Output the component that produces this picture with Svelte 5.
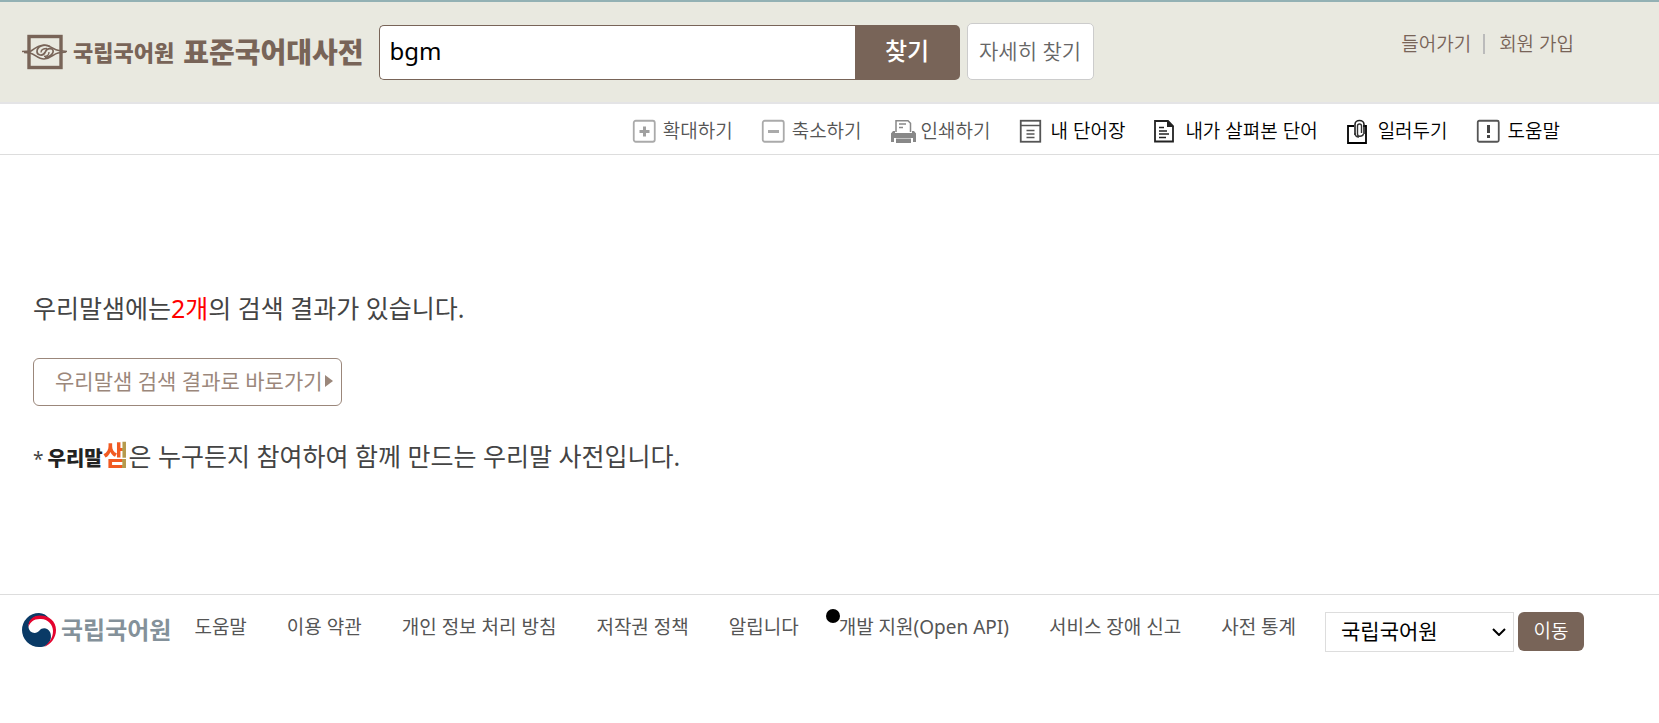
<script>
  const tools = [
    { id: 'zoomIn', label: '확대하기', tone: 'soft' },
    { id: 'zoomOut', label: '축소하기', tone: 'soft' },
    { id: 'print', label: '인쇄하기', tone: 'soft' },
    { id: 'words', label: '내 단어장', tone: 'strong' },
    { id: 'history', label: '내가 살펴본 단어', tone: 'strong' },
    { id: 'guide', label: '일러두기', tone: 'strong' },
    { id: 'help', label: '도움말', tone: 'strong' }
  ];
  const links = [
    { label: '도움말' },
    { label: '이용 약관' },
    { label: '개인 정보 처리 방침' },
    { label: '저작권 정책' },
    { label: '알립니다' },
    { label: '개발 지원(Open API)', dot: true },
    { label: '서비스 장애 신고' },
    { label: '사전 통계' }
  ];
  let query = $state('bgm');
</script>

<header>
  <a class="brand" href="#home">
    <svg width="46" height="36" viewBox="0 0 46 36" fill="none" stroke="#786458" aria-hidden="true">
      <rect x="7" y="2.5" width="32" height="31" stroke-width="3.4" />
      <path d="M0 17.5l9-.5c4-3 8-6 13-6 7 0 9 5 15 5.500l8 1" stroke-width="1.600" />
      <path d="M2 18.500l6 .5c5 1 8 6 14 6 7 0 9-5 14-6l8-1" stroke-width="1.600" />
      <path d="M28 12.500c-6-3-13 0-13 5 0 4 6 5 8 1 1.500-3.500 4-4.500 7-3.500 3 2 0 8-7 8.500" stroke-width="1.700" />
      <path d="M25 14.500c-4 0-6 2-6 4M27 18c0 3-2 4.500-5 4.500" stroke-width="1.300" />
    </svg>
    <span class="org">국립국어원</span>
    <span class="name">표준국어대사전</span>
  </a>
  <form class="search" onsubmit={(e) => e.preventDefault()}>
    <input type="text" aria-label="찾기" bind:value={query} />
    <button class="find" type="submit">찾기</button>
    <button class="advanced" type="button">자세히 찾기</button>
  </form>
  <nav class="account">
    <a href="#login">들어가기</a>
    <a href="#join">회원 가입</a>
  </nav>
</header>

<div class="toolbar">
  {#each tools as tool}
    <button type="button" class={tool.tone}>
      <svg width="22" height="26" viewBox="0 0 22 26" aria-hidden="true">
        {#if tool.id === 'zoomIn'}
          <rect x="0.75" y="2.750" width="21" height="21" rx="2" fill="none" stroke="#aaa" stroke-width="1.800" />
          <path d="M6.500 13.500h10M11.500 8.500v10" stroke="#a0a0a0" stroke-width="3" />
        {:else if tool.id === 'zoomOut'}
          <rect x="0.75" y="2.750" width="21" height="21" rx="2" fill="none" stroke="#aaa" stroke-width="1.800" />
          <path d="M6 13.500h11" stroke="#aaa" stroke-width="3" />
        {:else if tool.id === 'print'}
          <path d="M5 14V2.750h12l2.500 2.500V14" fill="#fff" stroke="#888" stroke-width="1.500" />
          <path d="M8 6h7M8 9.500h4" stroke="#888" stroke-width="1.300" />
          <path d="M2 13h2v2h17v-2h2l2 2.500V24h-3v-4H3v4H0v-8.500z" fill="#888" />
          <path d="M5 20.500h15V25H5z" fill="#888" />
          <path d="M0 16l1-1h23l1 1v4H0z" fill="#888" />
        {:else if tool.id === 'words'}
          <rect x="0.75" y="2.750" width="19.500" height="21" fill="none" stroke="#555" stroke-width="1.800" />
          <path d="M1 7.500h19" stroke="#555" stroke-width="1.500" />
          <path d="M6.500 12.500h8M6.500 16h8M6.500 19.500h8" stroke="#555" stroke-width="1.500" />
        {:else if tool.id === 'history'}
          <path d="M1 3h13l5 5v15.500H1z" fill="none" stroke="#222" stroke-width="1.800" />
          <path d="M13 2l7 7h-7z" fill="#222" />
          <path d="M5 9.500h5M5 13h8M5 16h10M5 19.500h7" stroke="#222" stroke-width="1.500" />
        {:else if tool.id === 'guide'}
          <path d="M7 8H1v17h18V8h-3" fill="none" stroke="#000" stroke-width="1.800" />
          <path d="M8 17V6.500a4.500 4 0 0 1 9 0V16" fill="none" stroke="#222" stroke-width="1.600" />
          <path d="M14.500 15V8a2 2 0 0 0-4 0v8c0 3 5 3 6 0M8 15c0 3 2 4 4 4" fill="none" stroke="#333" stroke-width="1.400" />
        {:else}
          <rect x="0.75" y="2.750" width="21" height="21" rx="1.500" fill="none" stroke="#555" stroke-width="1.800" />
          <path d="M11.500 7v8M11.500 17v3" stroke="#444" stroke-width="3" />
        {/if}
      </svg>
      {tool.label}
    </button>
  {/each}
</div>

<main>
  <p>우리말샘에는<em>2개</em>의 검색 결과가 있습니다.</p>
  <a class="jump" href="#opendict">
    우리말샘 검색 결과로 바로가기
    <svg width="8" height="12" viewBox="0 0 8 12" aria-hidden="true"><path d="M0 0l8 6-8 6z" fill="#9b877b" /></svg>
  </a>
  <p class="note"><small>*</small><b class="wordmark">우리말<i>샘</i></b>은 누구든지 참여하여 함께 만드는 우리말 사전입니다.</p>
</main>

<footer>
  <a class="agency" href="#agency">
    <svg width="34" height="34" viewBox="0 0 34 34" aria-hidden="true">
      <path d="M17 0A17 17 0 0 0 17 34c3 0 5-.6 7-1.600C29 29 30 24 28 19c-2-4.500-8-5-10.500-1.500C14 22 7 20 6.500 14 6.500 7 12 3 18 3c4 0 7 1 9.500 3C25 2 21 0 17 0z" fill="#0a3a66" />
      <path d="M6.500 14C6 7 11 2.500 18 2.500 27 2.500 34 8 34 17c0 8-5 14-12 17 5-4 9-9 9-16 0-6-5-12-12-12C12 5.500 8 9 6.500 14z" fill="#e4032e" />
    </svg>
    <span>국립국어원</span>
  </a>
  <nav class="links">
    {#each links as link}
      <a href="#info" class:dotted={link.dot}>{link.label}</a>
    {/each}
  </nav>
  <form class="sites" onsubmit={(e) => e.preventDefault()}>
    <div class="pick">
      <select aria-label="국립국어원">
        <option>국립국어원</option>
      </select>
      <svg width="14" height="8" viewBox="0 0 14 8" fill="none" aria-hidden="true"><path d="M1 1l6 6 6-6" stroke="#000" stroke-width="2" /></svg>
    </div>
    <button type="submit">이동</button>
  </form>
</footer>

<style>
  :global(body) {
    background: #fff;
    color: #444;
    font-family: "Noto Sans", "Noto Sans CJK KR", sans-serif;
    font-size: 19px;
    font-weight: 350;
    line-height: 28px;
  }
  a {
    color: inherit;
    text-decoration: none;
  }
  button,
  input,
  select {
    box-sizing: border-box;
    margin: 0;
    padding: 0;
    border: 0;
    background: none;
    color: inherit;
    font: inherit;
  }
  button,
  a {
    white-space: nowrap;
  }

  header {
    display: flex;
    align-items: flex-start;
    padding: 21px 85px 22px 22px;
    border-top: 2px solid #93b1b4;
    border-bottom: 2px solid #e4e4e6;
    background: #e9e9e0;
  }
  .brand {
    display: flex;
    align-items: center;
    height: 57px;
    margin-right: 15px;
    color: #786458;
    font-weight: 900;
  }
  .org {
    margin: 0 9px 0 5px;
    font-size: 22px;
  }
  .name {
    font-size: 28px;
  }
  .search {
    display: flex;
    flex: 0 1 715px;
    min-width: 0;
  }
  .search input {
    flex: 1;
    min-width: 0;
    height: 55px;
    margin-top: 2px;
    padding: 0 10px 4px;
    border: 1px solid #786458;
    border-right: 0;
    border-radius: 5px 0 0 5px;
    background: #fff;
    color: #000;
    font-size: 24px;
    font-weight: 400;
    outline: 0;
  }
  .find {
    width: 105px;
    height: 55px;
    margin: 2px 7px 0 0;
    padding-bottom: 4px;
    border-radius: 0 5px 5px 0;
    background: #786458;
    color: #fff;
    font-size: 24px;
    font-weight: 500;
  }
  .advanced {
    width: 127px;
    height: 57px;
    padding-bottom: 2px;
    border: 1px solid #ccc;
    border-radius: 5px;
    background: #fff;
    color: #666;
    font-size: 21px;
  }
  .account {
    display: flex;
    margin: 7px 0 0 auto;
    color: #786458;
  }
  .account a {
    display: flex;
    align-items: center;
  }
  .account a + a::before {
    width: 2px;
    height: 20px;
    margin: 0 14px 0 12px;
    background: #bbb;
    content: "";
  }

  .toolbar {
    display: flex;
    flex-wrap: wrap;
    justify-content: flex-end;
    gap: 0 29px;
    padding: 13px 99px 9px 22px;
    border-bottom: 1px solid #ddd;
  }
  .toolbar button {
    display: flex;
    align-items: center;
    gap: 8px;
    color: #555;
  }
  .toolbar svg {
    overflow: visible;
  }
  .toolbar .strong {
    gap: 9px;
    color: #000;
  }

  main {
    padding: 133px 33px 115px;
    font-size: 25px;
    font-weight: 400;
    line-height: 40px;
  }
  p {
    margin: 0;
  }
  em {
    color: #f00;
    font-style: normal;
  }
  .jump {
    display: inline-flex;
    align-items: center;
    gap: 2px;
    margin: 30px 0;
    padding: 0 8px 2px 21px;
    border: 1px solid #9b877b;
    border-radius: 6px;
    color: #9b877b;
    font-size: 21px;
    line-height: 44px;
    vertical-align: top;
  }
  small {
    margin-right: 4px;
    font-size: 19px;
  }
  .wordmark {
    color: #222;
    font-size: 20px;
    font-weight: 900;
  }
  .wordmark i {
    background: linear-gradient(to right, #f15a22 75%, #b59a4c 75%);
    background-clip: text;
    color: transparent;
    font-size: 28px;
    font-style: normal;
    font-weight: 700;
    line-height: 28px;
  }

  footer {
    display: flex;
    align-items: flex-start;
    padding: 17px 75px 20px 22px;
    border-top: 1px solid #ddd;
    color: #444;
  }
  .agency {
    display: flex;
    align-items: center;
    gap: 5px;
    height: 36px;
    margin-right: 23px;
    color: #84919a;
    font-size: 24px;
    font-weight: 700;
  }
  .links {
    display: flex;
    gap: 0 40px;
    padding-top: 1px;
    color: #555;
    font-weight: 400;
  }
  .dotted {
    position: relative;
  }
  .dotted::before {
    position: absolute;
    top: -4px;
    left: -13px;
    width: 14px;
    height: 14px;
    border-radius: 50%;
    background: #000;
    content: "";
  }
  .sites {
    display: flex;
    gap: 4px;
    margin-left: auto;
  }
  .pick {
    display: grid;
    align-items: center;
  }
  .pick > * {
    grid-area: 1 / 1;
  }
  .pick svg {
    margin-right: 8px;
    justify-self: end;
    pointer-events: none;
  }
  select {
    width: 189px;
    height: 40px;
    padding: 0 15px 2px;
    border: 1px solid #ddd;
    border-radius: 0;
    background: #fff;
    color: #000;
    font-size: 21px;
    font-weight: 400;
    appearance: none;
  }
  .sites button {
    width: 66px;
    height: 39px;
    padding-bottom: 2px;
    border-radius: 6px;
    background: #786458;
    color: #fff;
  }
</style>
